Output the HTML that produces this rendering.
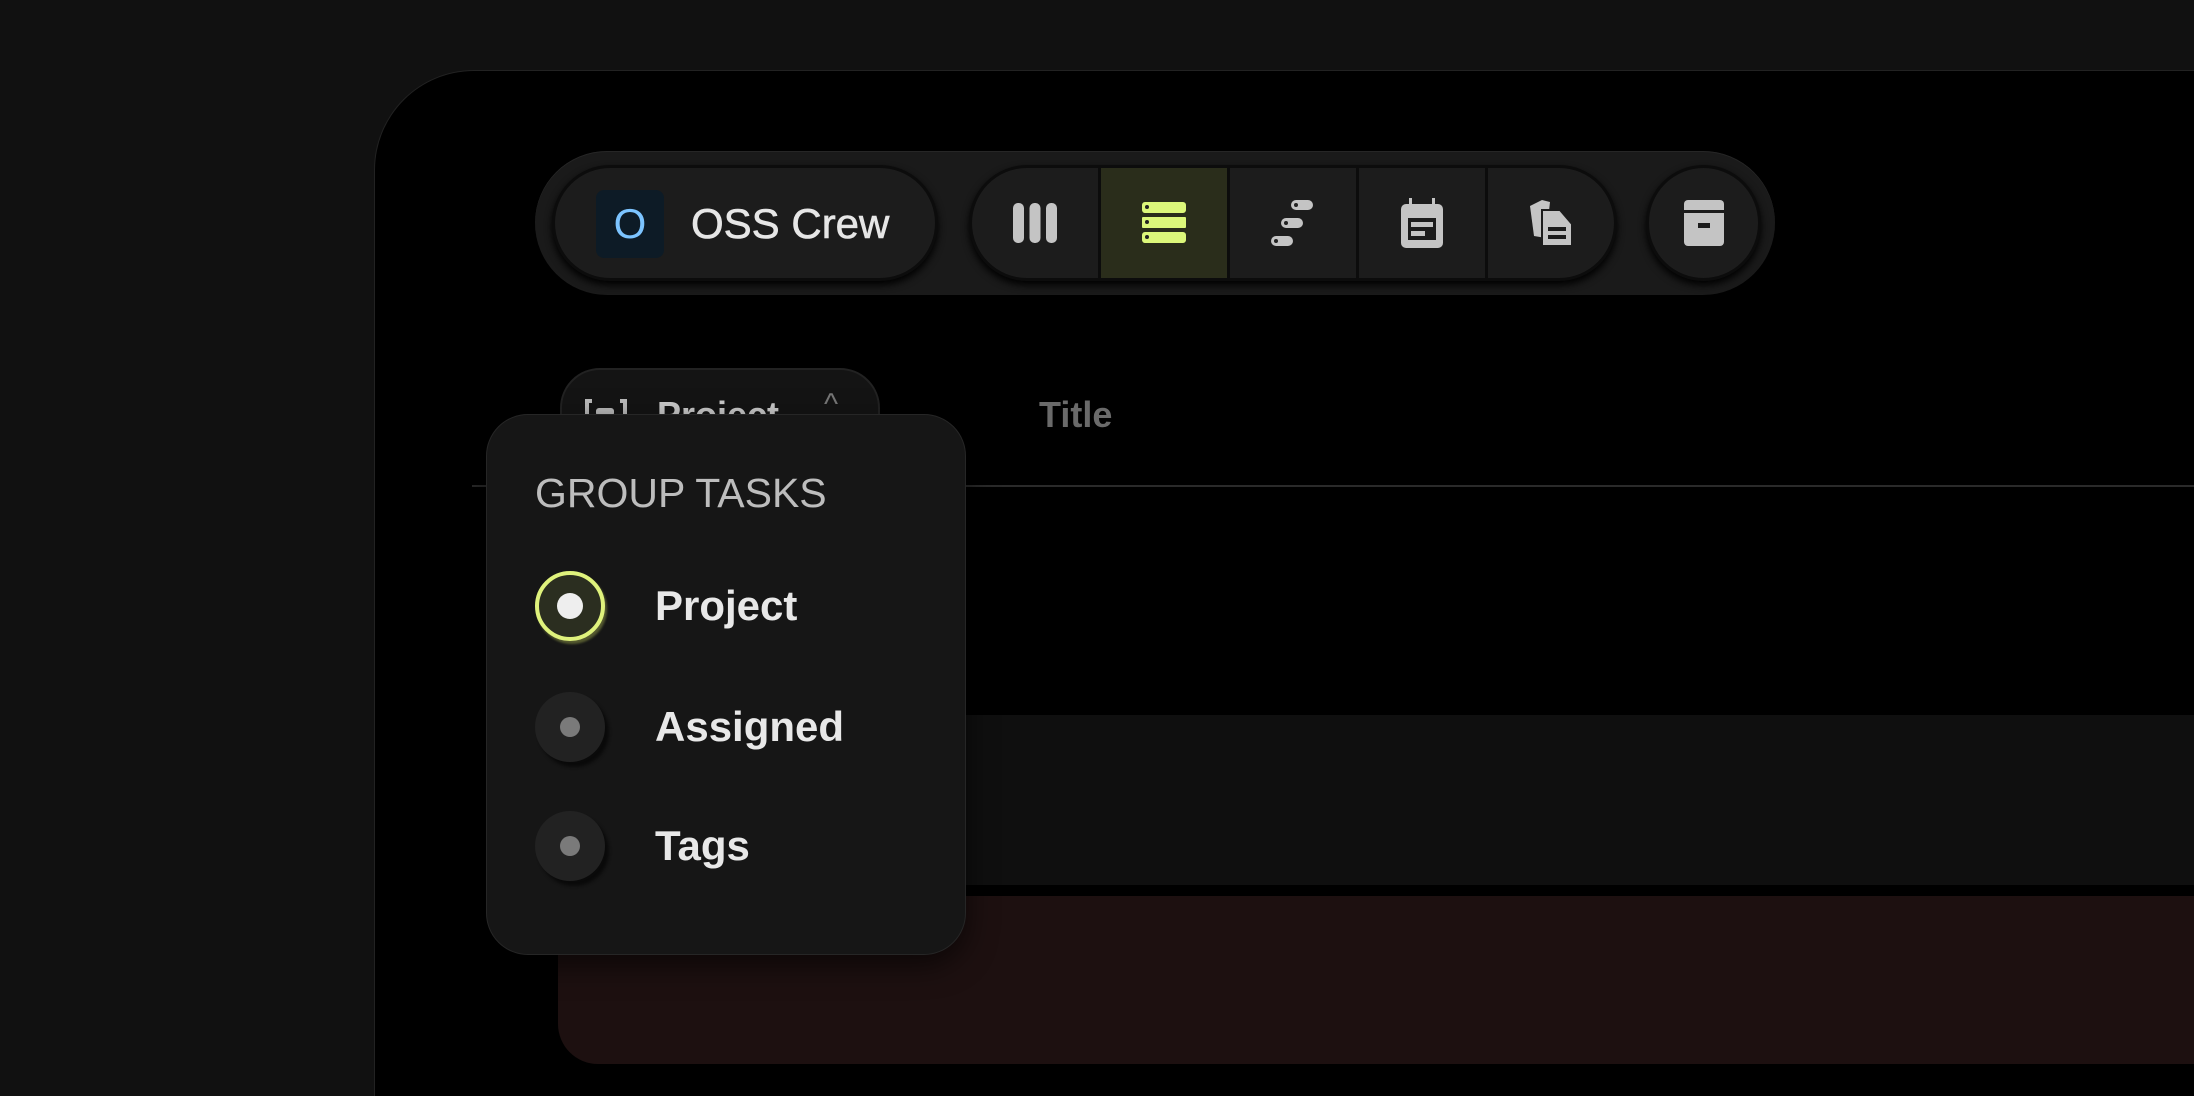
<!DOCTYPE html>
<html><head><meta charset="utf-8"><style>
*{margin:0;padding:0;box-sizing:border-box}
html,body{width:2194px;height:1096px;overflow:hidden}
body{background:#111;position:relative;font-family:"Liberation Sans",sans-serif}
.abs{position:absolute}
.panel{left:374px;top:70px;width:1820px;height:1026px;background:#000;border:1px solid #222;border-right:none;border-bottom:none;border-radius:100px 0 0 0}
.bar{left:535px;top:151px;width:1240px;height:144px;background:#1a1a1a;border-radius:72px;box-shadow:inset 0 1px 0 #262626}
.pill{left:552px;top:165px;width:386px;height:116px;background:#1c1c1c;border-radius:58px;border:3px solid #0c0c0c;box-shadow:0 4px 8px #000}
.av{left:596px;top:190px;width:68px;height:68px;background:#0d1b26;border-radius:8px;color:#7cc4ff;font-size:42px;text-align:center;line-height:68px}
.oss{left:691px;top:196px;font-size:42px;color:#e6e6e6;line-height:56px;-webkit-text-stroke:0.6px #e6e6e6}
.views{left:969px;top:165px;width:648px;height:116px;border-radius:58px;overflow:hidden;border:3px solid #0c0c0c;display:flex;background:#0c0c0c;box-shadow:0 4px 8px #000}
.seg{flex:1;background:#1c1c1c;margin-right:3px;display:flex;align-items:center;justify-content:center}
.seg:last-child{margin-right:0}
.seg.on{background:#2a2d1b}
.arch{left:1646px;top:165px;width:115px;height:116px;border-radius:58px;background:#1c1c1c;border:3px solid #0c0c0c;display:flex;align-items:center;justify-content:center;box-shadow:0 4px 8px #000}
.pbtn{left:560px;top:368px;width:320px;height:110px;background:#141414;border-radius:40px;border:2px solid #222}
.title{left:1039px;top:394px;font-size:36px;color:#6a6a6a;font-weight:bold}
.line{left:472px;top:485px;width:1800px;height:2px;background:#2a2a2a}
.row{left:560px;top:715px;width:1700px;height:170px;background:#0f0f0f}
.red{left:558px;top:896px;width:1700px;height:168px;background:#1d1010;border-radius:40px 0 0 40px}
.pop{left:486px;top:414px;width:480px;height:541px;background:#161616;border-radius:42px;border:1px solid #262626;box-shadow:0 10px 30px rgba(0,0,0,.6)}
.gt{left:535px;top:469px;font-size:41px;color:#bdbdbd;line-height:48px}
.lbl{left:655px;font-size:42px;color:#e8e8e8;font-weight:bold;line-height:50px}
.rad{left:535px;width:70px;height:70px;border-radius:50%;background:#222;box-shadow:4px 5px 3px #0a0a0a}
.rad i{position:absolute;left:50%;top:50%;width:20px;height:20px;margin:-10px;border-radius:50%;background:#7a7a7a}
.rad.on{background:#2b2e20;border:4px solid #dff27c;box-shadow:2px 3px 2px #555a30}
.rad.on i{width:26px;height:26px;margin:-13px;background:#eee}
</style></head><body>
<div class="abs panel"></div>
<div class="abs bar"></div>
<div class="abs pill"></div>
<div class="abs av">O</div>
<div class="abs oss">OSS Crew</div>
<div class="abs views">
 <div class="seg"><svg width="46" height="44" viewBox="0 0 46 44"><rect x="1" y="2" width="11" height="40" rx="5" fill="#c4c4c4"/><rect x="17.5" y="2" width="11" height="40" rx="5" fill="#c4c4c4"/><rect x="34" y="2" width="11" height="40" rx="5" fill="#c4c4c4"/></svg></div>
 <div class="seg on"><svg width="44" height="42" viewBox="0 0 44 42"><rect x="0" y="0" width="44" height="11" rx="3" fill="#dcf77a"/><rect x="0" y="15" width="44" height="11" rx="1" fill="#dcf77a"/><rect x="0" y="30" width="44" height="11" rx="3" fill="#dcf77a"/><circle cx="5" cy="5" r="2" fill="#222"/><circle cx="5" cy="20" r="2" fill="#222"/><circle cx="5" cy="35" r="2" fill="#222"/></svg></div>
 <div class="seg"><svg width="44" height="46" viewBox="0 0 44 46"><rect x="20" y="0" width="22" height="10" rx="5" fill="#c4c4c4"/><rect x="10" y="18" width="22" height="10" rx="5" fill="#c4c4c4"/><rect x="0" y="36" width="22" height="10" rx="5" fill="#c4c4c4"/><circle cx="25" cy="5" r="2" fill="#222"/><circle cx="15" cy="23" r="2" fill="#222"/><circle cx="5" cy="41" r="2" fill="#222"/></svg></div>
 <div class="seg"><svg width="42" height="50" viewBox="0 0 42 50"><rect x="0" y="6" width="42" height="44" rx="5" fill="#c4c4c4"/><rect x="8" y="0" width="3" height="10" fill="#c4c4c4"/><rect x="31" y="0" width="3" height="10" fill="#c4c4c4"/><rect x="7" y="20" width="28" height="22" fill="#1c1c1c"/><rect x="10" y="24" width="22" height="5" fill="#c4c4c4"/><rect x="10" y="33" width="14" height="5" fill="#c4c4c4"/></svg></div>
 <div class="seg"><svg width="46" height="50" viewBox="0 0 46 50"><path d="M2 8 L14 2 L22 4 L18 40 L6 38 Z" fill="#c4c4c4"/><path d="M14 12 L32 12 L44 26 L44 48 L14 48 Z" fill="#c4c4c4" stroke="#1c1c1c" stroke-width="2"/><rect x="20" y="29" width="18" height="4" fill="#1c1c1c"/><rect x="20" y="37" width="18" height="4" fill="#1c1c1c"/></svg></div>
</div>
<div class="abs arch"><svg width="40" height="46" viewBox="0 0 40 46"><rect x="0" y="0" width="40" height="46" rx="4" fill="#c4c4c4"/><rect x="0" y="10" width="40" height="3" fill="#1c1c1c"/><rect x="14" y="23" width="12" height="5" fill="#1c1c1c"/></svg></div>
<div class="abs line"></div>
<div class="abs row"></div>
<div class="abs red"></div>
<div class="abs pbtn"><svg style="position:absolute;left:22px;top:28px" width="44" height="36" viewBox="0 0 44 36"><path d="M8 3H3V33H8M36 3H41V33H36" stroke="#bbb" stroke-width="4" fill="none"/><rect x="12" y="10" width="18" height="8" rx="3" fill="#bbb"/></svg><span style="position:absolute;left:95px;top:24px;font-size:36px;color:#ccc;font-weight:bold">Project</span><span style="position:absolute;left:262px;top:18px;font-size:30px;color:#777">^</span></div>
<div class="abs title">Title</div>
<div class="abs pop"></div>
<div class="abs gt">GROUP TASKS</div>
<div class="abs rad on" style="top:571px"><i></i></div>
<div class="abs lbl" style="top:581px">Project</div>
<div class="abs rad" style="top:692px"><i></i></div>
<div class="abs lbl" style="top:702px">Assigned</div>
<div class="abs rad" style="top:811px"><i></i></div>
<div class="abs lbl" style="top:821px">Tags</div>
</body></html>
